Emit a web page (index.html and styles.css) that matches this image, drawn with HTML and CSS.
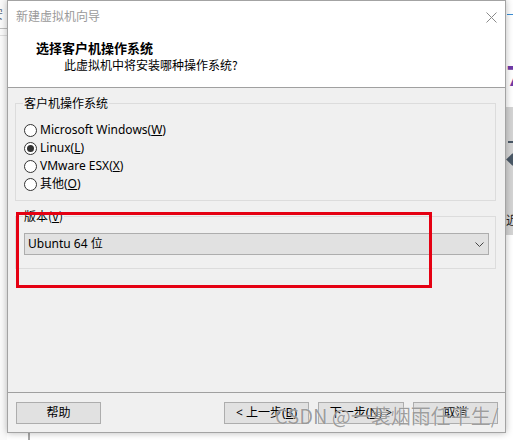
FILE: index.html
```html
<!DOCTYPE html>
<html lang="zh-CN">
<head>
<meta charset="utf-8">
<title>新建虚拟机向导</title>
<link rel="stylesheet" href="styles.css">
</head>
<body>
<div class="desktop">
  <div class="bg-left">
    <span class="bg-char">安</span>
    <div class="bg-line bg-line-1"></div>
    <div class="bg-line bg-line-2"></div>
    <div class="bg-vline"></div>
  </div>
  <div class="bg-right">
    <div class="bg-blue"></div>
    <span class="bg-seven">7</span>
    <div class="bg-panel">
      <div class="bg-dash"></div>
      <div class="bg-arrow"></div>
      <span class="bg-jin">近</span>
    </div>
  </div>

  <div class="dialog">
    <div class="header">
      <div class="titlebar">
        <span class="title">新建虚拟机向导</span>
        <svg class="close" width="11" height="11" viewBox="0 0 11 11">
          <path d="M0.5 0.5 L10.5 10.5 M10.5 0.5 L0.5 10.5" stroke="#8a8a8a" stroke-width="1" fill="none"/>
        </svg>
      </div>
      <div class="h-title">选择客户机操作系统</div>
      <div class="h-sub">此虚拟机中将安装哪种操作系统?</div>
    </div>

    <div class="body">
      <fieldset class="group group-os">
        <legend>客户机操作系统</legend>
        <div class="radio"><span class="dot"></span><span>Microsoft Windows(<u>W</u>)</span></div>
        <div class="radio checked"><span class="dot"></span><span>Linux(<u>L</u>)</span></div>
        <div class="radio"><span class="dot"></span><span>VMware ESX(<u>X</u>)</span></div>
        <div class="radio"><span class="dot"></span><span>其他(<u>O</u>)</span></div>
      </fieldset>

      <fieldset class="group group-ver">
        <legend>版本(<u>V</u>)</legend>
        <div class="select">
          <span>Ubuntu 64 位</span>
          <svg class="chev" width="9" height="5" viewBox="0 0 9 5">
            <path d="M0.5 0.5 L4.5 4.5 L8.5 0.5" stroke="#444" stroke-width="1" fill="none"/>
          </svg>
        </div>
      </fieldset>

      <div class="highlight"></div>
    </div>

    <div class="footer">
      <button class="btn">帮助</button>
      <div class="nav">
        <button class="btn">&lt; 上一步(<u>B</u>)</button>
        <button class="btn btn-next">下一步(<u>N</u>) &gt;</button>
        <button class="btn">取消</button>
      </div>
    </div>
  </div>

  <div class="watermark">CSDN @一蓑烟雨任平生/</div>
</div>
</body>
</html>
```

FILE: styles.css
```css
* { box-sizing: border-box; }

html, body {
  margin: 0;
  padding: 0;
  background: #ffffff;
}

body {
  font-family: "Noto Sans", "Noto Sans CJK SC", sans-serif;
  font-size: 12px;
  line-height: 16px;
  color: #000;
}

.desktop {
  position: relative;
  width: 513px;
  height: 440px;
  overflow: hidden;
  background: #ffffff;
}

/* background windows (free canvas behind the dialog) */
.bg-left {
  position: absolute;
  left: 0;
  top: 0;
  width: 7px;
  height: 440px;
  background: #fafafa;
}
.bg-char {
  position: absolute;
  left: -9px;
  top: 7px;
  font-family: "Noto Sans CJK SC", sans-serif;
  font-size: 12px;
  line-height: 14px;
  color: #5a6a80;
}
.bg-line {
  position: absolute;
  left: 0;
  width: 7px;
  height: 1px;
  background: #bdbdbd;
}
.bg-line-1 { top: 28px; }
.bg-line-2 { top: 35px; background: #dedede; }
.bg-vline {
  position: absolute;
  left: 28px;
  top: 432px;
  width: 2px;
  height: 8px;
  background: #a8a8a8;
}

.bg-right {
  position: absolute;
  left: 505px;
  top: 0;
  width: 8px;
  height: 440px;
  background: #ffffff;
}
.bg-blue {
  position: absolute;
  left: 2px;
  top: 14px;
  width: 8px;
  height: 1px;
  background: #3c8fd6;
}
.bg-seven {
  position: absolute;
  left: 1px;
  top: 62px;
  font-family: "DejaVu Sans", sans-serif;
  font-weight: bold;
  font-size: 26px;
  line-height: 30px;
  color: #6f3aa8;
}
.bg-panel {
  position: absolute;
  left: 0;
  top: 107px;
  width: 8px;
  height: 128px;
  background: #d4d4d4;
}
.bg-dash {
  position: absolute;
  left: 3px;
  top: 34px;
  width: 6px;
  height: 2px;
  background: #4a5866;
}
.bg-arrow {
  position: absolute;
  left: 3px;
  top: 48px;
  width: 9px;
  height: 9px;
  background: #4a5866;
  transform: rotate(45deg);
}
.bg-jin {
  position: absolute;
  left: 1px;
  top: 106px;
  font-family: "Noto Sans CJK SC", sans-serif;
  font-size: 12px;
  line-height: 14px;
  color: #222;
}

/* dialog window */
.dialog {
  position: absolute;
  left: 7px;
  top: 0;
  width: 499px;
  height: 433px;
  border: 1px solid #a3a3a3;
  background: #f0f0f0;
  display: flex;
  flex-direction: column;
  box-shadow: 0 0 7px rgba(0, 0, 0, 0.28);
}

.header {
  height: 87px;
  flex: none;
  background: #ffffff;
  border-bottom: 1px solid #a0a0a0;
  padding: 6px 0 0 0;
}

.titlebar {
  display: flex;
  justify-content: space-between;
  align-items: center;
  height: 18px;
  padding: 0 8px 0 8px;
}
.title {
  font-family: "Noto Sans CJK SC", sans-serif;
  font-size: 12px;
  line-height: 16px;
  color: #9a9a9a;
}
.close {
  display: block;
  margin-top: 3px;
}

.h-title {
  margin-top: 14px;
  padding-left: 28px;
  font-family: "Noto Sans CJK SC", sans-serif;
  font-weight: bold;
  font-size: 13px;
  line-height: 17px;
}
.h-sub {
  padding-left: 56px;
  font-family: "Noto Sans CJK SC", sans-serif;
  font-size: 12px;
  line-height: 17px;
}

.body {
  position: relative;
  height: 304px;
  flex: none;
  padding-top: 7px;
}

.group {
  margin: 0 9px 0 7px;
  border: 1px solid #dcdcdc;
  padding: 10px 6px 7px 8px;
  min-width: 0;
}
.group legend {
  padding: 0 1px;
  margin-left: -1px;
  font-family: "Noto Sans CJK SC", sans-serif;
  font-size: 12px;
  line-height: 16px;
}

.group-ver {
  margin-top: 7px;
  padding-top: 9px;
  padding-bottom: 13px;
}

.radio {
  display: flex;
  align-items: center;
  gap: 3px;
  height: 18px;
}
.dot {
  width: 13px;
  height: 13px;
  border: 1px solid #333;
  border-radius: 50%;
  background: #fff;
  display: flex;
  align-items: center;
  justify-content: center;
  flex: none;
}
.radio.checked .dot::after {
  content: "";
  width: 7px;
  height: 7px;
  border-radius: 50%;
  background: #333;
}

.select {
  height: 22px;
  border: 1px solid #adadad;
  background: #e1e1e1;
  display: flex;
  align-items: center;
  justify-content: space-between;
  padding: 0 4px 0 3px;
}
.chev { display: block; }

.highlight {
  position: absolute;
  left: 8px;
  top: 124px;
  width: 416px;
  height: 76px;
  border: 3px solid #e50012;
  pointer-events: none;
}

.footer {
  flex: 1;
  border-top: 1px solid #a0a0a0;
  display: flex;
  justify-content: space-between;
  align-items: flex-start;
  padding: 9px 7px 0 8px;
}
.nav {
  display: flex;
  gap: 9px;
}
.btn {
  width: 85px;
  height: 22px;
  border: 1px solid #adadad;
  background: #e1e1e1;
  font-family: "Noto Sans", "Noto Sans CJK SC", sans-serif;
  font-size: 12px;
  line-height: 16px;
  color: #000;
  padding: 0;
  margin: 0;
}
.btn-next { width: 86px; }

.watermark {
  position: absolute;
  left: 275px;
  top: 403px;
  font-family: "Noto Sans CJK SC", sans-serif;
  font-weight: normal;
  font-size: 20px;
  line-height: 26px;
  color: rgba(95, 95, 95, 0.6);
  white-space: nowrap;
  text-shadow: 0 0 1px rgba(255, 255, 255, 0.9);
  pointer-events: none;
}
```
